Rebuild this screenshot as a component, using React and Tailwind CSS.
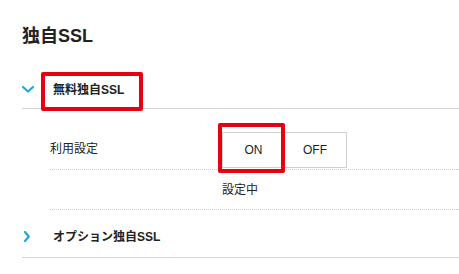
import React from "react";

const font = { fontFamily: '"Liberation Sans", "Noto Sans CJK JP", sans-serif' };

const ChevronDown = () => (
  <svg width="12" height="7" viewBox="0 0 12 7" className="shrink-0">
    <path d="M1 1 L6 5.5 L11 1" fill="none" stroke="#20a8d8" strokeWidth="2.2" strokeLinecap="round" strokeLinejoin="round" />
  </svg>
);

const ChevronRight = () => (
  <svg width="6" height="11" viewBox="0 0 6 11" className="shrink-0">
    <path d="M1 1 L4.8 5.5 L1 10" fill="none" stroke="#20a8d8" strokeWidth="2.2" strokeLinecap="round" strokeLinejoin="round" />
  </svg>
);

export default function App() {
  return (
    <div className="w-[459px] h-[274px] bg-white text-[#222] overflow-hidden pl-[22px]" style={font}>
      {/* タイトル */}
      <h1 className="h-[70px] pt-[25px] text-[18px] leading-[22px] font-bold">独自SSL</h1>

      {/* 無料独自SSL */}
      <div className="relative flex items-center h-[39px] border-b border-[#d4d4d4]">
        <div className="w-[31px] pt-[1px]"><ChevronDown /></div>
        <span className="text-[12px] font-bold pt-[1px]">無料独自SSL</span>
        <div className="absolute left-[19px] top-[2px] w-[102px] h-[39px] border-4 border-[#e50012] rounded-[2px]"></div>
      </div>

      <div className="pl-[28px]">
        <div className="flex items-center pt-[23px] pb-[1px] border-b border-dotted border-[#c8c8c8]">
          <span className="w-[172px] text-[12px] pb-[3px]">利用設定</span>
          <div className="relative flex h-[36px] border border-[#d0d0d0] text-[12px]">
            <div className="w-[61px] flex items-center justify-center">ON</div>
            <div className="w-[62px] flex items-center justify-center">OFF</div>
            <div className="absolute left-[-5px] top-[-10px] w-[67px] h-[50px] border-4 border-[#e50012] rounded-[2px]"></div>
          </div>
        </div>
        <div className="flex items-center h-[40px] border-b border-dotted border-[#c8c8c8]">
          <span className="ml-[172px] text-[12px]">設定中</span>
        </div>
      </div>

      {/* オプション独自SSL */}
      <div className="flex items-center h-[48px] pt-[6px] border-b border-[#d4d4d4]">
        <div className="w-[31px] pl-[2px]"><ChevronRight /></div>
        <span className="text-[12px] font-bold">オプション独自SSL</span>
      </div>
    </div>
  );
}
